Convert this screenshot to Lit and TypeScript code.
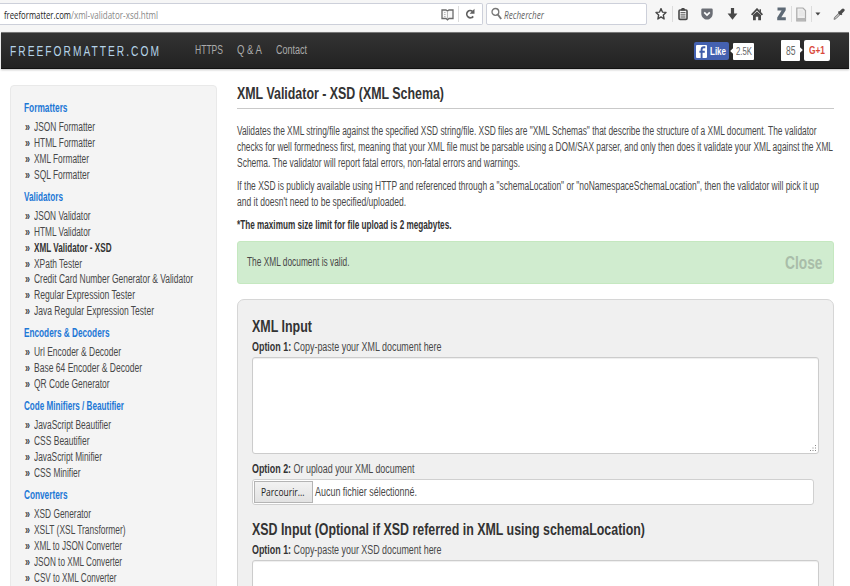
import { LitElement, html, css, svg } from "lit";
import { customElement, property } from "lit/decorators.js";

/** One line of text, condensed horizontally to a given width. */
@customElement("fit-line")
class FitLine extends LitElement {
  @property({ type: Number }) w = 100;
  static styles = css`
    :host { display: block; white-space: nowrap; flex: none; }
    .line { display: inline-block; transform-origin: 0 50%; vertical-align: top; }
  `;
  render() {
    return html`<span class="line"><slot></slot></span>`;
  }
  updated() {
    const line = this.renderRoot.querySelector(".line") as HTMLElement;
    this.style.width = this.w + "px";
    line.style.transform = "none";
    const natural = line.getBoundingClientRect().width;
    if (natural > 0) line.style.transform = `translateY(var(--drop, 0px)) scaleX(${this.w / natural})`;
  }
}

type Item = [string, number, boolean?];
const sections: { title: string; w: number; items: Item[] }[] = [
  { title: "Formatters", w: 43.5, items: [["JSON Formatter", 61], ["HTML Formatter", 61], ["XML Formatter", 55], ["SQL Formatter", 55.5]] },
  { title: "Validators", w: 39, items: [
    ["JSON Validator", 56.5], ["HTML Validator", 56.5], ["XML Validator - XSD", 77.5, true], ["XPath Tester", 48],
    ["Credit Card Number Generator & Validator", 159], ["Regular Expression Tester", 101], ["Java Regular Expression Tester", 120]] },
  { title: "Encoders & Decoders", w: 85.5, items: [["Url Encoder & Decoder", 87], ["Base 64 Encoder & Decoder", 108], ["QR Code Generator", 75.5]] },
  { title: "Code Minifiers / Beautifier", w: 100, items: [["JavaScript Beautifier", 77], ["CSS Beautifier", 55.5], ["JavaScript Minifier", 68], ["CSS Minifier", 46.5]] },
  { title: "Converters", w: 43.5, items: [["XSD Generator", 57], ["XSLT (XSL Transformer)", 91.5], ["XML to JSON Converter", 88], ["JSON to XML Converter", 88], ["CSV to XML Converter", 82.5]] },
];

const icon = (cls: string, w: number, h: number, body: unknown) =>
  html`<svg class=${cls} width=${w} height=${h} viewBox="0 0 ${w} ${h}">${body}</svg>`;

@customElement("browser-bar")
class BrowserBar extends LitElement {
  static styles = css`
    :host { display: flex; height: 32px; background: #f6f6f6; font: 10.5px/18px "Open Sans", sans-serif; color: #222; box-sizing: border-box; padding-top: 3px; --drop: .6px; }
    .field { height: 22px; box-sizing: border-box; border: 1px solid #cdd0da; background: #fff; display: flex; align-items: center; }
    .url { width: 483px; border-left: 0; padding-left: 4px; border-radius: 0 2px 2px 0; }
    .url .path { color: #888; flex: 1; }
    .search { width: 161px; margin-left: 3px; border-radius: 2px; padding-left: 4px; gap: 2px; font-style: italic; color: #666; }
    .bar { width: 1px; height: 16px; background: #dcdcdc; }
    .book { margin-right: 4px; }
    .reload { margin: 0 6px 0 6px; }
    .tools { display: flex; align-items: center; height: 22px; margin-left: 8px; }
    .tools svg { flex: none; }
    .star { margin-right: 5px; }
    .clip { margin: 0 13px 0 5px; }
    .pocket { margin-right: 14px; }
    .down { margin-right: 13px; }
    .home { margin-right: 14px; }
    .zed { margin-right: 5px; }
    .doc { margin: 0 4px 0 4px; }
    .caret { margin: 0 12px 0 3px; }
  `;
  render() {
    return html`
      <div class="field url">
        <fit-line w="67">freeformatter.com</fit-line>
        <span class="path"><fit-line w="87">/xml-validator-xsd.html</fit-line></span>
        ${icon("book", 13, 13, svg`<path d="M1 2H5L6.5 3L8 2H12V10.5H8L6.5 11.8L5 10.5H1Z" fill="#f8f8f8" stroke="#6b6b6b" stroke-width="1.3"/><path d="M6.5 3V11" stroke="#aaa" stroke-width=".8"/><path d="M3 4.5H4.6M3 6.5H4.6M3 8.5H4.6" stroke="#aaa" stroke-width=".8"/>`)}
        <span class="bar"></span>
        ${icon("reload", 11, 12, svg`<path d="M8.2 8.4A3.6 3.6 0 1 1 7.4 3.2" fill="none" stroke="#606060" stroke-width="1.7"/><path d="M9.5 .8V5.8H4.6Z" fill="#606060"/>`)}
      </div>
      <div class="field search">
        ${icon("", 11, 14, svg`<circle cx="4.4" cy="4.9" r="3.4" fill="none" stroke="#777" stroke-width="1.3"/><path d="M6.8 7.5L10.2 12" stroke="#777" stroke-width="1.9"/>`)}
        <fit-line w="40">Rechercher</fit-line>
      </div>
      <div class="tools">
        ${icon("star", 12, 14, svg`<path d="M6 1.6L7.4 5.1L11 5.4L8.3 8L9.1 12L6 9.9L2.9 12L3.7 8L1 5.4L4.6 5.1Z" fill="#fff" stroke="#484848" stroke-width="1.4" stroke-linejoin="round"/>`)}
        <span class="bar"></span>
        ${icon("clip", 10, 14, svg`<rect x="1" y="3" width="8" height="9.4" rx="1" fill="#f6f6f6" stroke="#484848" stroke-width="1.6"/><path d="M3 3.4V2L4 1H6L7 2V3.4Z" fill="#484848"/><path d="M2.5 5.7H7.5M2.5 7.9H7.5M2.5 10H7.5" stroke="#484848" stroke-width="1"/>`)}
        ${icon("pocket", 12, 12, svg`<path d="M1.5 .5H10.5Q11.7 .5 11.7 1.7V5.5C11.7 9 9 11.6 6 11.6S.3 9 .3 5.5V1.7Q.3 .5 1.5 .5Z" fill="#6b6e75"/><path d="M3.2 4.3L6 7.1L8.8 4.3" fill="none" stroke="#fff" stroke-width="1.7"/>`)}
        ${icon("down", 11, 14, svg`<path d="M3.9 1H7.1V6.5H10.4L5.5 12.8L.6 6.5H3.9Z" fill="#484848"/>`)}
        ${icon("home", 12, 13, svg`<path d="M.6 6.8L6 1.2L11.4 6.8" fill="none" stroke="#484848" stroke-width="1.8"/><path d="M2 7L6 3.4L10 7V12.3H7.2V8.8H4.8V12.3H2Z" fill="#484848"/><path d="M8.5 1.2H10V4.5L8.5 3.2Z" fill="#484848"/>`)}
        ${icon("zed", 9, 14, svg`<path d="M.5 .5H8.7V3.2L4.3 10.3H8.8V13.3H.2V10.4L4.6 3.6H.5Z" fill="#5e6a76"/>`)}
        <span class="bar"></span>
        ${icon("doc", 11, 15, svg`<path d="M1.5 1H7L9.5 3.5V13.8H.8V1Z" fill="#eee" stroke="#aaa" stroke-width="1.2"/><path d="M1 11H9.5V13.5H1Z" fill="#b5b5b5"/><path d="M3 4H7M3 6H8M3 8H8" stroke="#ddd" stroke-width=".8"/>`)}
        <span class="bar"></span>
        ${icon("caret", 6, 4, svg`<path d="M.4 .4H5.4L2.9 3.4Z" fill="#444"/>`)}
        ${icon("", 12, 12, svg`<path d="M1 11.4L1.6 9.3L6.3 4.6L7.7 6L3 10.7Z" fill="#bbb" stroke="#777" stroke-width=".9"/><path d="M5.5 3.5L8.8 6.8" stroke="#4a4a4a" stroke-width="1.6"/><path d="M7.2 5L10 2.2" stroke="#4a4a4a" stroke-width="3.2" stroke-linecap="round"/>`)}
      </div>`;
  }
}

@customElement("site-nav")
class SiteNav extends LitElement {
  static styles = css`
    :host { display: flex; align-items: center; height: 37px; margin: 0 1px; box-sizing: border-box; background: linear-gradient(#333, #222); border-top: 1px solid #777; border-bottom: 1px solid #111; box-shadow: 0 1px 2px rgba(0,0,0,.25); padding: 0 19px 1px 9px; color: #aaa; font: 12.5px/16px "Liberation Sans", sans-serif; }
    .brand { font-size: 14px; letter-spacing: 2.8px; color: #b5d3e8; margin-right: 34px; margin-top: 2px; }
    .links { display: flex; gap: 14px; flex: 1; }
    .fb { display: flex; align-items: center; height: 18px; width: 35px; box-sizing: border-box; background: #4461b0; border-radius: 2px; padding-left: 2px; gap: 3px; color: #fff; font: bold 10px/18px "Liberation Sans"; margin-right: 4px; margin-top: 2px; --drop: 1px; }
    .count { position: relative; background: #fff; color: #666; display: flex; justify-content: center; align-items: center; border-radius: 1px; }
    .likes { width: 21px; height: 17px; font-size: 11px; margin: 2px 27px 0 0; }
    .likes::before, .plus::after { content: ""; position: absolute; top: 50%; width: 4px; height: 4px; background: #fff; transform: translateY(-50%) rotate(45deg); }
    .likes::before { left: -2px; }
    .plus { width: 19px; height: 21px; font-size: 12px; margin-right: 4px; --drop: .5px; }
    .plus::after { right: -2px; }
    .gone { width: 26px; height: 21px; background: #fff; border-radius: 2px; color: #d9493a; display: flex; align-items: center; justify-content: center; font: bold 11.5px/21px "Liberation Sans"; }
  `;
  render() {
    return html`
      <fit-line class="brand" w="151">FREEFORMATTER.COM</fit-line>
      <div class="links">
        <fit-line w="28">HTTPS</fit-line>
        <fit-line w="25">Q &amp; A</fit-line>
        <fit-line w="31">Contact</fit-line>
      </div>
      <div class="fb">
        ${icon("", 11, 13, svg`<rect width="11" height="13" rx="1" fill="#fff"/><path d="M9.3 2.2H8Q5.6 2.2 5.6 4.6V13M3.4 6.8H8.8" fill="none" stroke="#3f5ca8" stroke-width="1.9"/>`)}
        <fit-line w="16">Like</fit-line>
      </div>
      <div class="count likes"><fit-line w="16">2.5K</fit-line></div>
      <div class="count plus"><fit-line w="9.5">85</fit-line></div>
      <div class="gone"><fit-line w="16">G+1</fit-line></div>`;
  }
}

@customElement("tool-menu")
class ToolMenu extends LitElement {
  static styles = css`
    :host { display: block; width: 207px; height: 520px; box-sizing: border-box; background: #f4f4f4; border: 1px solid #e9e9e9; border-radius: 4px; padding: 15px 0 0 13.3px; font: 12px/15.83px "Liberation Sans", sans-serif; color: #484848; }
    section { margin-bottom: 6.2px; }
    .title { font-weight: bold; color: #1e78d6; margin-bottom: 3.5px; }
    .item { display: flex; padding-left: 1px; gap: 4.5px; }
    .mark { color: #444; font-weight: bold; }
    .on { font-weight: bold; color: #333; }
  `;
  render() {
    return sections.map(s => html`<section>
      <fit-line class="title" w=${s.w}>${s.title}</fit-line>
      ${s.items.map(([t, w, on]) => html`<div class="item">
        <fit-line class="mark" w="5">»</fit-line><fit-line class=${on ? "on" : ""} w=${w}>${t}</fit-line>
      </div>`)}
    </section>`);
  }
}

@customElement("validator-page")
class ValidatorPage extends LitElement {
  static styles = css`
    :host { display: block; width: 597px; font: 12px/15.83px "Liberation Sans", sans-serif; color: #484848; --drop: .7px; }
    h1, h2, .close { --drop: 0px; }
    b, .strong { color: #333; font-weight: bold; }
    h1 { margin: 0 0 14px; height: 23px; line-height: 17px; font-size: 16.3px; color: #333; border-bottom: 1px solid #c9c9c9; }
    h2 { margin: 0; font-size: 16.3px; line-height: 20px; color: #333; }
    .para { margin-bottom: 7.6px; }
    .alert { height: 43.5px; box-sizing: border-box; margin-top: 7.5px; background: #d0eccf; border: 1px solid #c5e8c0; border-radius: 3px; display: flex; align-items: center; justify-content: space-between; padding: 0 11px 0 9.3px; }
    .close { font: bold 17.5px/20px "Liberation Sans"; color: #a9bda9; margin-top: 1px; }
    form { margin-top: 15px; height: 300px; box-sizing: border-box; background: #f0f0f0; border: 1px solid #d6d6d6; border-radius: 7px; padding: 15.5px 14px 0 13.5px; }
    .label { line-height: 21px; }
    .area { position: relative; height: 97px; box-sizing: border-box; background: #fff; border: 1px solid #ccc; border-radius: 3px; box-shadow: inset 0 1px 1px rgba(0,0,0,.07); margin-bottom: 4px; display: flex; justify-content: flex-end; align-items: flex-end; padding: 1px; }
    .file { width: 562px; height: 26px; box-sizing: border-box; background: #fff; border: 1px solid #d0d0d0; border-radius: 3px; display: flex; align-items: center; padding-left: 1px; gap: 2.9px; margin-bottom: 14.5px; }
    .btn { width: 59px; height: 22px; box-sizing: border-box; border: 1px solid #b4b4b4; background: linear-gradient(#f2f2f2, #e2e2e2); display: flex; justify-content: center; align-items: center; color: #222; font: 500 11px/18px "Open Sans", sans-serif; --drop: 0px; }
  `;
  render() {
    return html`
      <h1><fit-line w="207">XML Validator - XSD (XML Schema)</fit-line></h1>
      <div class="para">
        <fit-line w="579.5">Validates the XML string/file against the specified XSD string/file. XSD files are "XML Schemas" that describe the structure of a XML document. The validator</fit-line>
        <fit-line w="596">checks for well formedness first, meaning that your XML file must be parsable using a DOM/SAX parser, and only then does it validate your XML against the XML</fit-line>
        <fit-line w="283">Schema. The validator will report fatal errors, non-fatal errors and warnings.</fit-line>
      </div>
      <div class="para">
        <fit-line w="582">If the XSD is publicly available using HTTP and referenced through a "schemaLocation" or "noNamespaceSchemaLocation", then the validator will pick it up</fit-line>
        <fit-line w="169">and it doesn't need to be specified/uploaded.</fit-line>
      </div>
      <fit-line class="strong" w="214.5">*The maximum size limit for file upload is 2 megabytes.</fit-line>
      <div class="alert">
        <fit-line w="102.5">The XML document is valid.</fit-line>
        <fit-line class="close" w="37.5">Close</fit-line>
      </div>
      <form>
        <h2><fit-line w="60">XML Input</fit-line></h2>
        <fit-line class="label" w="189.5"><b>Option 1:</b> Copy-paste your XML document here</fit-line>
        <div class="area">${icon("", 7, 7, svg`<path d="M5 0h1v1H5zM5 2.5h1v1H5zM2.5 2.5h1v1h-1zM5 5h1v1H5zM2.5 5h1v1h-1zM0 5h1v1H0z" fill="#888"/>`)}</div>
        <fit-line class="label" w="162.5"><b>Option 2:</b> Or upload your XML document</fit-line>
        <div class="file">
          <div class="btn"><fit-line w="43.5">Parcourir...</fit-line></div>
          <fit-line w="102">Aucun fichier sélectionné.</fit-line>
        </div>
        <h2><fit-line w="393">XSD Input (Optional if XSD referred in XML using schemaLocation)</fit-line></h2>
        <fit-line class="label" w="189.5"><b>Option 1:</b> Copy-paste your XSD document here</fit-line>
        <div class="area"></div>
      </form>`;
  }
}

@customElement("app-root")
class AppRoot extends LitElement {
  static styles = css`
    :host { display: block; width: 850px; height: 586px; overflow: hidden; background: #fff; }
    .body { display: flex; padding-left: 9.5px; gap: 20.5px; }
    tool-menu { margin-top: 16px; }
    validator-page { margin-top: 16px; }
  `;
  render() {
    return html`
      <browser-bar></browser-bar>
      <site-nav></site-nav>
      <div class="body">
        <tool-menu></tool-menu>
        <validator-page></validator-page>
      </div>`;
  }
}
